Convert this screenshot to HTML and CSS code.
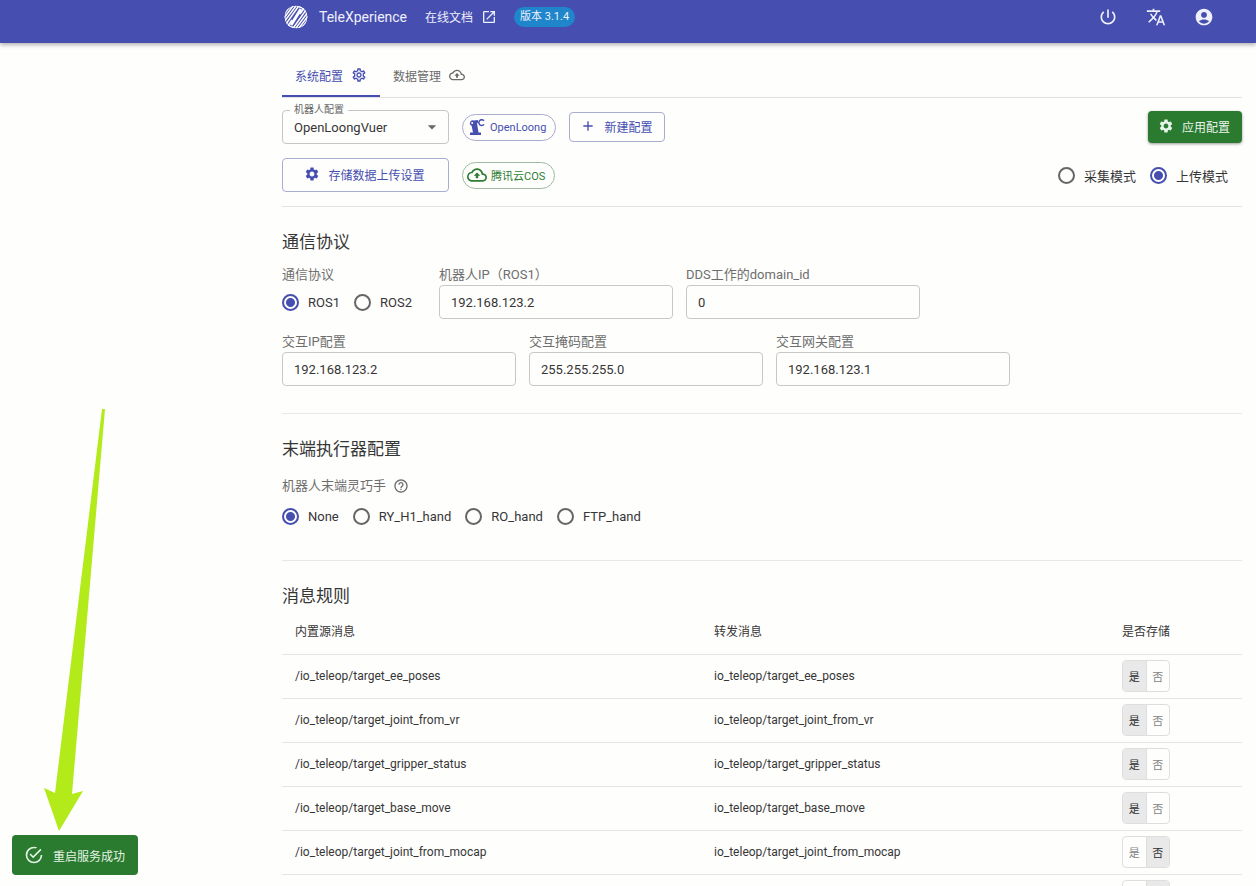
FILE: index.html
```html
<!DOCTYPE html>
<html lang="zh-CN">
<head>
  <meta charset="UTF-8" />
  <meta name="viewport" content="width=device-width, initial-scale=1.0" />
  <title>TeleXperience</title>
  <link rel="stylesheet" href="styles.css">
</head>
<body>
  <!-- shared icons -->
  <svg class="sprite" aria-hidden="true">
    <symbol id="gear" viewBox="0 0 24 24"><path d="M19.14 12.94c.04-.3.06-.61.06-.94 0-.32-.02-.64-.07-.94l2.03-1.58c.18-.14.23-.41.12-.61l-1.92-3.32c-.12-.22-.37-.29-.59-.22l-2.39.96c-.5-.38-1.03-.7-1.62-.94l-.36-2.54c-.04-.24-.24-.41-.48-.41h-3.84c-.24 0-.43.17-.47.41l-.36 2.54c-.59.24-1.13.57-1.62.94l-2.39-.96c-.22-.08-.47 0-.59.22L2.74 8.87c-.12.21-.08.47.12.61l2.03 1.58c-.05.3-.09.63-.09.94s.02.64.07.94l-2.03 1.58c-.18.14-.23.41-.12.61l1.92 3.32c.12.22.37.29.59.22l2.39-.96c.5.38 1.03.7 1.62.94l.36 2.54c.05.24.24.41.48.41h3.84c.24 0 .44-.17.47-.41l.36-2.54c.59-.24 1.13-.56 1.62-.94l2.39.96c.22.08.47 0 .59-.22l1.92-3.32c.12-.22.07-.47-.12-.61zM12 15.6c-1.98 0-3.6-1.62-3.6-3.6s1.62-3.6 3.6-3.6 3.6 1.62 3.6 3.6-1.62 3.6-3.6 3.6z"/></symbol>
    <symbol id="gear-outline" viewBox="0 0 24 24"><path d="M19.43 12.98c.04-.32.07-.64.07-.98s-.03-.66-.07-.98l2.11-1.65c.19-.15.24-.42.12-.64l-2-3.46c-.09-.16-.26-.25-.44-.25-.06 0-.12.01-.17.03l-2.49 1c-.52-.4-1.08-.73-1.69-.98l-.38-2.65C14.46 2.18 14.25 2 14 2h-4c-.25 0-.46.18-.49.42l-.38 2.65c-.61.25-1.17.59-1.69.98l-2.49-1c-.06-.02-.12-.03-.18-.03-.17 0-.34.09-.43.25l-2 3.46c-.13.22-.07.49.12.64l2.11 1.65c-.04.32-.07.65-.07.98s.03.66.07.98l-2.11 1.65c-.19.15-.24.42-.12.64l2 3.46c.09.16.26.25.44.25.06 0 .12-.01.17-.03l2.49-1c.52.4 1.08.73 1.69.98l.38 2.65c.03.24.24.42.49.42h4c.25 0 .46-.18.49-.42l.38-2.65c.61-.25 1.17-.59 1.69-.98l2.49 1c.06.02.12.03.18.03.17 0 .34-.09.43-.25l2-3.46c.12-.22.07-.49-.12-.64zm-1.98-1.71c.04.31.05.52.05.73s-.02.43-.05.73l-.14 1.13.89.7 1.08.84-.7 1.21-1.27-.51-1.04-.42-.9.68c-.43.32-.84.56-1.25.73l-1.06.43-.16 1.13-.2 1.35h-1.4l-.19-1.35-.16-1.13-1.06-.43c-.43-.18-.83-.41-1.23-.71l-.91-.7-1.06.43-1.27.51-.7-1.21 1.08-.84.89-.7-.14-1.13c-.03-.31-.05-.54-.05-.74s.02-.43.05-.73l.14-1.13-.89-.7-1.08-.84.7-1.21 1.27.51 1.04.42.9-.68c.43-.32.84-.56 1.25-.73l1.06-.43.16-1.13.2-1.35h1.39l.19 1.35.16 1.13 1.06.43c.43.18.83.41 1.23.71l.91.7 1.06-.43 1.27-.51.7 1.21-1.07.85-.89.7zM12 8c-2.21 0-4 1.79-4 4s1.79 4 4 4 4-1.79 4-4-1.79-4-4-4m0 6c-1.1 0-2-.9-2-2s.9-2 2-2 2 .9 2 2-.9 2-2 2"/></symbol>
    <symbol id="cloud" viewBox="0 0 24 24"><path d="M19.35 10.04C18.67 6.59 15.64 4 12 4 9.11 4 6.6 5.64 5.35 8.04 2.34 8.36 0 10.91 0 14c0 3.31 2.69 6 6 6h13c2.76 0 5-2.24 5-5 0-2.64-2.05-4.78-4.65-4.96M19 18H6c-2.21 0-4-1.79-4-4 0-2.05 1.53-3.76 3.56-3.97l1.07-.11.5-.95C8.08 7.14 9.94 6 12 6c2.62 0 4.88 1.86 5.39 4.43l.3 1.5 1.53.11c1.56.1 2.78 1.41 2.78 2.96 0 1.65-1.35 3-3 3M8 13h2.55v3h2.9v-3H16l-4-4z"/></symbol>
  </svg>

  <header class="topbar">
    <a class="brand" href="#">
      <svg class="logo" viewBox="0 0 24 24" fill="none" stroke="#fff">
        <clipPath id="disc"><circle cx="12" cy="12" r="11.5"/></clipPath>
        <g clip-path="url(#disc)">
          <path stroke-width="1.4" d="M0 9 6 1M0 13 9 1M0 17 12 1M2 19 14 2M3 22 8 15M16 9 21 2M10 22 22 5M12 23 24 7M15 23 24 11M18 23 24 15"/>
          <path stroke-width="3" d="M7 20 17 4"/>
          <path stroke-width="1.3" d="M13 2Q18 1 20 5M4 19Q6 23 11 22"/>
          <circle cx="12" cy="12" r="11" stroke-width="1" stroke-opacity=".7"/>
        </g>
      </svg>
      <span>TeleXperience</span>
    </a>
    <a class="docs" href="#">
      在线文档
      <svg class="icon" viewBox="0 0 24 24"><path d="M19 19H5V5h7V3H5c-1.11 0-2 .9-2 2v14c0 1.1.89 2 2 2h14c1.1 0 2-.9 2-2v-7h-2zM14 3v2h3.59l-9.83 9.83 1.41 1.41L19 6.41V10h2V3z"/></svg>
    </a>
    <span class="version">版本 3.1.4</span>
    <div class="actions">
      <button class="icon-button" aria-label="电源">
        <svg class="icon large" viewBox="0 0 24 24"><path d="M13 3h-2v10h2zm4.83 2.17-1.42 1.42C17.99 7.86 19 9.81 19 12c0 3.87-3.13 7-7 7s-7-3.13-7-7c0-2.19 1.01-4.14 2.58-5.42L6.17 5.17C4.23 6.82 3 9.26 3 12c0 4.97 4.03 9 9 9s9-4.03 9-9c0-2.74-1.23-5.18-3.17-6.83"/></svg>
      </button>
      <button class="icon-button" aria-label="语言">
        <svg class="icon large" viewBox="0 0 24 24"><path d="m12.87 15.07-2.54-2.51.03-.03c1.74-1.94 2.98-4.17 3.71-6.53H17V4h-7V2H8v2H1v1.99h11.17C11.5 7.92 10.44 9.75 9 11.35 8.07 10.32 7.3 9.19 6.69 8h-2c.73 1.63 1.73 3.17 2.98 4.56l-5.09 5.02L4 19l5-5 3.11 3.11zM18.5 10h-2L12 22h2l1.12-3h4.75L21 22h2zm-2.62 7 1.62-4.33L19.12 17z"/></svg>
      </button>
      <button class="icon-button" aria-label="账户">
        <svg class="icon large" viewBox="0 0 24 24"><path d="M12 2C6.48 2 2 6.48 2 12s4.48 10 10 10 10-4.48 10-10S17.52 2 12 2m0 4c1.93 0 3.5 1.57 3.5 3.5S13.93 13 12 13s-3.5-1.57-3.5-3.5S10.07 6 12 6m0 14c-2.03 0-4.43-.82-6.14-2.88C7.55 15.8 9.68 15 12 15s4.45.8 6.14 2.12C16.43 19.18 14.03 20 12 20"/></svg>
      </button>
    </div>
  </header>

  <main class="content">
    <nav class="tabs">
      <button class="tab active">系统配置 <svg class="icon"><use href="#gear-outline"/></svg></button>
      <button class="tab">数据管理 <svg class="icon"><use href="#cloud"/></svg></button>
    </nav>

    <div class="toolbar">
      <div class="toolbar-row">
        <div class="select-box">
          <label for="robot">机器人配置</label>
          <select id="robot">
            <option>OpenLoongVuer</option>
          </select>
          <svg class="arrow" viewBox="0 0 24 24"><path d="m7 10 5 5 5-5z"/></svg>
        </div>
        <span class="chip">
          <svg class="icon" viewBox="0 0 16 16">
            <path d="M1 16v-2.500h3L2.600 6.800A2.700 2.700 0 1 1 5 1.600L9 .900v2.500L8 4.500 9.500 13.500h2.500V16z"/>
            <circle cx="3.200" cy="4" r="1" fill="#fff"/>
            <path d="M15 1.800A2.900 2.900 0 1 0 15 5.400" fill="none" stroke="currentColor" stroke-width="1.500"/>
          </svg>
          OpenLoong
        </span>
        <button class="button">
          <svg class="icon" viewBox="0 0 24 24"><path d="M19 13h-6v6h-2v-6H5v-2h6V5h2v6h6z"/></svg>
          新建配置
        </button>
        <button class="button apply"><svg class="icon"><use href="#gear"/></svg>应用配置</button>
      </div>
      <div class="toolbar-row">
        <button class="button upload"><svg class="icon"><use href="#gear"/></svg>存储数据上传设置</button>
        <span class="chip green"><svg class="icon large"><use href="#cloud"/></svg>腾讯云COS</span>
        <div class="radios mode">
          <label class="radio"><input type="radio" name="mode">采集模式</label>
          <label class="radio"><input type="radio" name="mode" checked>上传模式</label>
        </div>
      </div>
    </div>

    <section class="section">
      <h2>通信协议</h2>
      <div class="fields">
        <div class="field-group" role="radiogroup" aria-labelledby="protocol">
          <span class="label" id="protocol">通信协议</span>
          <div class="radios">
            <label class="radio"><input type="radio" name="ros" checked>ROS1</label>
            <label class="radio"><input type="radio" name="ros">ROS2</label>
          </div>
        </div>
        <div class="field">
          <label class="label" for="robot-ip">机器人IP（ROS1）</label>
          <input id="robot-ip" type="text" value="192.168.123.2">
        </div>
        <div class="field">
          <label class="label" for="domain">DDS工作的domain_id</label>
          <input id="domain" type="text" value="0">
        </div>
      </div>
      <div class="fields">
        <div class="field">
          <label class="label" for="ip">交互IP配置</label>
          <input id="ip" type="text" value="192.168.123.2">
        </div>
        <div class="field">
          <label class="label" for="mask">交互掩码配置</label>
          <input id="mask" type="text" value="255.255.255.0">
        </div>
        <div class="field">
          <label class="label" for="gateway">交互网关配置</label>
          <input id="gateway" type="text" value="192.168.123.1">
        </div>
      </div>
    </section>

    <section class="section">
      <h2>末端执行器配置</h2>
      <div class="hand-label label" id="hand">
        机器人末端灵巧手
        <svg class="icon" viewBox="0 0 24 24"><path d="M11 18h2v-2h-2zm1-16C6.480 2 2 6.480 2 12s4.480 10 10 10 10-4.480 10-10S17.520 2 12 2m0 18c-4.410 0-8-3.590-8-8s3.590-8 8-8 8 3.590 8 8-3.590 8-8 8m0-14c-2.210 0-4 1.790-4 4h2c0-1.100.9-2 2-2s2 .9 2 2c0 2-3 1.750-3 5h2c0-2.250 3-2.500 3-5 0-2.210-1.790-4-4-4"/></svg>
      </div>
      <div class="radios" role="radiogroup" aria-labelledby="hand">
        <label class="radio"><input type="radio" name="hand" checked>None</label>
        <label class="radio"><input type="radio" name="hand">RY_H1_hand</label>
        <label class="radio"><input type="radio" name="hand">RO_hand</label>
        <label class="radio"><input type="radio" name="hand">FTP_hand</label>
      </div>
    </section>

    <section class="section rules">
      <h2>消息规则</h2>
      <table>
        <thead>
          <tr><th class="source">内置源消息</th><th>转发消息</th><th class="store">是否存储</th></tr>
        </thead>
        <tbody>
          <tr>
            <td>/io_teleop/target_ee_poses</td>
            <td>io_teleop/target_ee_poses</td>
            <td><div class="toggle"><button class="on">是</button><button>否</button></div></td>
          </tr>
          <tr>
            <td>/io_teleop/target_joint_from_vr</td>
            <td>io_teleop/target_joint_from_vr</td>
            <td><div class="toggle"><button class="on">是</button><button>否</button></div></td>
          </tr>
          <tr>
            <td>/io_teleop/target_gripper_status</td>
            <td>io_teleop/target_gripper_status</td>
            <td><div class="toggle"><button class="on">是</button><button>否</button></div></td>
          </tr>
          <tr>
            <td>/io_teleop/target_base_move</td>
            <td>io_teleop/target_base_move</td>
            <td><div class="toggle"><button class="on">是</button><button>否</button></div></td>
          </tr>
          <tr>
            <td>/io_teleop/target_joint_from_mocap</td>
            <td>io_teleop/target_joint_from_mocap</td>
            <td><div class="toggle"><button>是</button><button class="on">否</button></div></td>
          </tr>
          <tr>
            <td></td>
            <td></td>
            <td><div class="toggle"><button aria-label="是"></button><button class="on" aria-label="否"></button></div></td>
          </tr>
        </tbody>
      </table>
    </section>
  </main>

  <svg class="pointer" viewBox="0 0 40 424" aria-hidden="true"><path d="M58 1h3L28 386l11-3L15 423 0 380l11 5z"/></svg>

  <div class="snackbar" role="status">
    <svg class="icon large" viewBox="0 0 24 24"><path d="M20 12A8 8 0 0 1 12 20A8 8 0 0 1 4 12A8 8 0 0 1 12 4C12.760 4 13.500 4.110 14.200 4.310L15.770 2.740C14.610 2.260 13.340 2 12 2A10 10 0 0 0 2 12A10 10 0 0 0 12 22A10 10 0 0 0 22 12M7.910 10.080L6.500 11.500L11 16L21 6L19.590 4.580L11 13.170Z"/></svg>
    重启服务成功
  </div>
</body>
</html>
```
FILE: styles.css
```css
* {
  box-sizing: border-box;
}

body {
  margin: 0;
  height: 100vh;
  overflow: hidden;
  background: #fefefd;
  color: #363636;
  font-family: Roboto, "Noto Sans CJK SC", sans-serif;
  font-size: 13px;
}

button,
input,
select {
  font: inherit;
  color: inherit;
}

button {
  cursor: pointer;
}

a {
  color: inherit;
  text-decoration: none;
}

.sprite {
  display: none;
}

.icon {
  width: 16px;
  height: 16px;
  flex: none;
  fill: currentColor;
}

.icon.large {
  width: 20px;
  height: 20px;
}

/* top bar */
.topbar {
  display: flex;
  align-items: center;
  height: 43px;
  padding: 0 42px 10px 284px;
  background: #464eb0;
  color: #eef0fb;
  box-shadow: 0 2px 4px rgba(0, 0, 0, 0.3);
}

.brand,
.docs {
  display: flex;
  align-items: center;
  gap: 8px;
}

.brand {
  gap: 11px;
  margin-right: 18px;
  font-size: 14px;
}

.docs {
  margin-right: 17px;
  font-size: 12px;
}

.logo {
  width: 24px;
  height: 24px;
}

.version {
  padding: 0 6px;
  border-radius: 10px;
  background: #1f86cb;
  font-size: 11px;
  line-height: 20px;
}

.actions {
  display: flex;
  gap: 28px;
  margin-left: auto;
}

.icon-button {
  display: flex;
  padding: 0;
  border: none;
  background: none;
}

/* content */
.content {
  margin: 0 14px 0 282px;
}

.tabs {
  display: flex;
  height: 55px;
  padding-top: 12px;
  border-bottom: 1px solid #e2e2e4;
}

.tab {
  display: flex;
  align-items: center;
  gap: 8px;
  padding: 0 13px;
  border: none;
  border-bottom: 2px solid transparent;
  background: none;
  color: #6b6b6b;
  font-size: 12px;
}

.tab.active {
  border-color: #464eb0;
  color: #464eb0;
}

.toolbar {
  display: flex;
  flex-direction: column;
  gap: 14px;
  padding: 12px 0 14px;
  border-bottom: 1px solid #e4e4e4;
}

.toolbar-row {
  display: flex;
  align-items: center;
  gap: 13px;
  height: 34px;
}

.select-box {
  position: relative;
  width: 167px;
}

.select-box label {
  position: absolute;
  top: -7px;
  left: 8px;
  padding: 0 4px;
  background: #fefefd;
  color: #666;
  font-size: 10px;
  line-height: 14px;
}

.select-box select {
  width: 100%;
  height: 34px;
  padding: 0 11px;
  border: 1px solid #c6c6c6;
  border-radius: 4px;
  background: none;
  appearance: none;
}

.arrow {
  position: absolute;
  top: 7px;
  right: 7px;
  width: 20px;
  height: 20px;
  fill: #666;
  pointer-events: none;
}

.chip {
  display: flex;
  align-items: center;
  gap: 5px;
  height: 27px;
  padding: 0 9px 0 6px;
  border: 1px solid #a9abcf;
  border-radius: 14px;
  color: #464eb0;
  font-size: 11px;
}

.chip.green {
  gap: 4px;
  padding-left: 4px;
  border-color: #9fb9a5;
  color: #2e7d32;
}

.button {
  display: flex;
  align-items: center;
  justify-content: center;
  gap: 8px;
  height: 30px;
  padding: 0 12px 2px 10px;
  border: 1px solid #a9adcf;
  border-radius: 4px;
  background: none;
  color: #464eb0;
  font-size: 12px;
}

.button.upload {
  width: 167px;
  height: 34px;
}

.button.apply {
  height: 32px;
  margin-left: auto;
  border: none;
  background: #2a7a30;
  color: #e9f5ea;
  box-shadow: 0 1px 3px rgba(0, 0, 0, 0.4);
}

.radios {
  display: flex;
  align-items: center;
  height: 34px;
}

.radios.mode {
  margin-left: auto;
}

.radio {
  display: flex;
  align-items: center;
  gap: 9px;
  margin-right: 14px;
}

.radio input {
  width: 17px;
  height: 17px;
  margin: 0;
  border: 2px solid #666;
  border-radius: 50%;
  appearance: none;
}

.radio input:checked {
  border-color: #464eb0;
  background: radial-gradient(circle, #464eb0 4px, transparent 5px);
}

/* sections */
.section {
  padding: 23px 0 27px;
  border-bottom: 1px solid #e8e8e8;
}

.section h2 {
  margin: 0 0 11px;
  font-size: 17px;
  font-weight: 400;
  line-height: 24px;
}

.fields {
  display: flex;
  gap: 13px;
}

.fields + .fields {
  margin-top: 13px;
}

.field {
  flex: 0 1 234px;
}

.label {
  display: block;
  color: #6e6e6e;
  line-height: 20px;
}

.field input {
  width: 100%;
  height: 34px;
  padding: 0 11px;
  border: 1px solid #c8c8c8;
  border-radius: 4px;
  background: none;
}

.hand-label {
  display: flex;
  align-items: center;
  gap: 7px;
  height: 27px;
}

/* message rules */
.rules h2 {
  margin: 0;
}

table {
  width: 100%;
  border-collapse: collapse;
  table-layout: fixed;
  font-size: 12px;
}

th,
td {
  height: 44px;
  padding: 0 13px;
  border-bottom: 1px solid #e6e6e6;
  text-align: left;
}

th {
  height: 46px;
  font-weight: 400;
}

.source {
  width: 419px;
}

.store {
  width: 133px;
}

.toggle {
  display: flex;
  width: 48px;
  height: 32px;
  border: 1px solid #dedede;
  border-radius: 4px;
  overflow: hidden;
}

.toggle button {
  flex: 1;
  padding: 0;
  border: none;
  background: none;
  color: #858585;
  font-size: 11px;
}

.toggle button + button {
  border-left: 1px solid #dedede;
}

.toggle .on {
  background: #e9e9e9;
  color: #303030;
}

/* overlays */
.pointer {
  position: fixed;
  bottom: 54px;
  left: 44px;
  width: 40px;
  height: 424px;
  overflow: visible;
  fill: #b2ea1a;
}

.snackbar {
  position: fixed;
  bottom: 11px;
  left: 12px;
  display: flex;
  align-items: center;
  gap: 9px;
  height: 40px;
  padding: 0 13px 0 12px;
  border-radius: 4px;
  background: #2a7a30;
  color: #e3f3e4;
  font-size: 12px;
}
```
